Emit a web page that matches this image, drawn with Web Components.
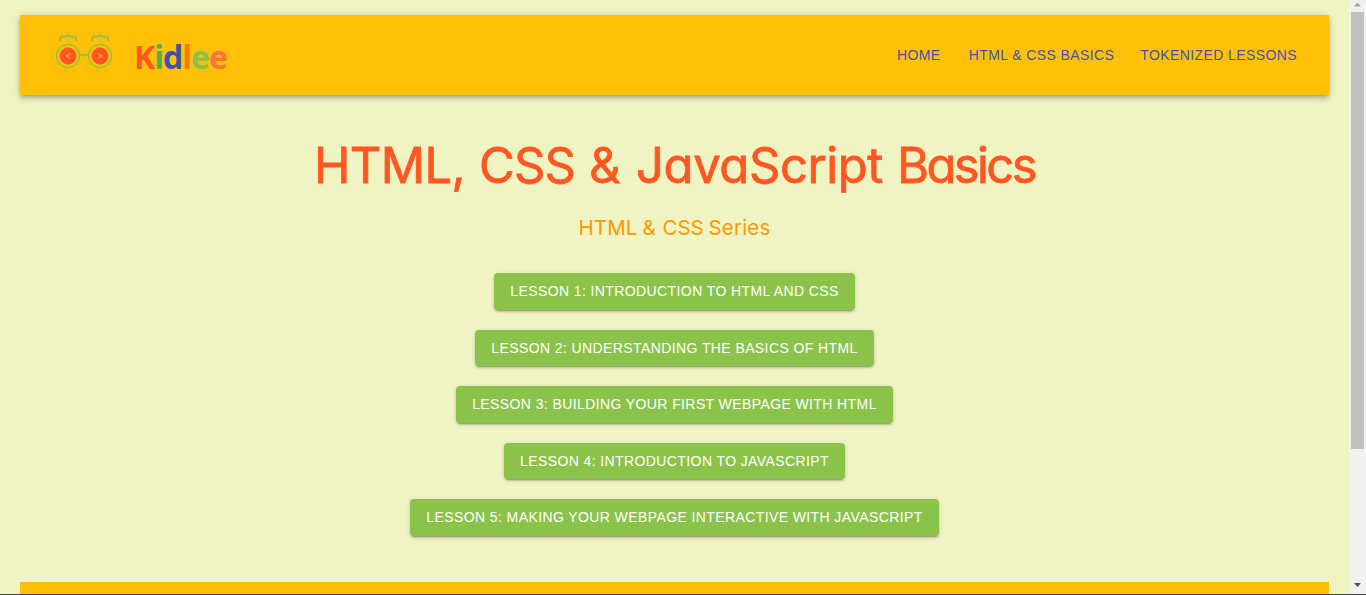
<!DOCTYPE html>
<html lang="en">
<head>
<meta charset="utf-8">
<title>Kidlee</title>
<style>
html,body{margin:0;height:100%;overflow:hidden}
body{font-family:"Liberation Sans",Arial,sans-serif;background:#f0f4c3}
</style>
</head>
<body>
<kid-app></kid-app>
<script>
const define = (name, html, setup) => customElements.define(name, class extends HTMLElement {
  connectedCallback() {
    if (this.shadowRoot) return;
    const t = document.createElement('template');
    t.innerHTML = html;
    this.attachShadow({mode: 'open'}).append(t.content.cloneNode(true));
    if (setup) setup(this);
  }
});

// Eyeglasses with curly-brace eyebrows and tag-bracket pupils
define('kid-glasses', `<style>:host{display:block;width:60px;height:40px}svg{display:block}</style>
<svg width="60" height="40" viewBox="54 32 60 40" fill="none" stroke="#8bc34a">
  <g stroke-width="1.9">
    <path d="M60 41.3v-1.8q0-3 3.2-3h2.4q2.3 0 2.5-2.2.2 2.2 2.5 2.2h2.4q3.2 0 3.2 3v1.8"/>
    <path d="M92 41.3v-1.8q0-3 3.2-3h2.4q2.3 0 2.5-2.2.2 2.2 2.5 2.2h2.4q3.2 0 3.2 3v1.8"/>
    <path d="M80 55h8"/>
  </g>
  <g stroke-width="1.3"><circle cx="68" cy="56" r="11.4"/><circle cx="100" cy="56" r="11.4"/></g>
  <g fill="#ff5722" stroke="none"><circle cx="68" cy="56" r="8.5"/><circle cx="100" cy="56" r="8.5"/></g>
  <g stroke="#ffb02a" stroke-width="1.1"><path d="M70 53.6 66.4 56l3.6 2.4M98 53.6l3.6 2.4-3.6 2.4"/></g>
</svg>`);

define('kid-logo', `<style>
:host{display:flex;align-items:flex-start}
.name{font:700 32px/44px "Open Sans","Noto Sans",sans-serif;letter-spacing:-1px;margin:3px 0 0 20px;white-space:nowrap}
</style><kid-glasses></kid-glasses><div class="name"></div>`, el => {
  const colors = ['#ff5722','#4caf50','#3f51b5','#f57c00','#8bc34a','#ff7043'];
  [...'Kidlee'].forEach((c, i) => {
    const s = document.createElement('span');
    s.textContent = c; s.style.color = colors[i];
    el.shadowRoot.querySelector('.name').append(s);
  });
});

define('kid-link', `<style>
:host{display:block;box-sizing:border-box;min-width:64px;padding:6px 8px;text-align:center;white-space:nowrap;font-size:14px;line-height:24.5px;letter-spacing:.4px;color:#3f51b5}
</style><slot></slot>`);

define('kid-header', `<style>
:host{display:flex;justify-content:space-between;box-sizing:border-box;height:80px;padding:17px 24px 0 34px;background:#ffc107;
box-shadow:0 2px 4px -1px rgba(0,0,0,.2),0 4px 5px rgba(0,0,0,.14),0 1px 10px rgba(0,0,0,.12)}
nav{display:flex;gap:10px;align-items:flex-start;padding-top:5px}
</style><kid-logo></kid-logo><nav><slot></slot></nav>`);

// A word whose tracking is set so that it spans its "w" attribute in pixels
define('kid-word', `<style>:host{display:inline-block;white-space:nowrap}</style><span><slot></slot></span>`, el => {
  const w = +el.getAttribute('w');
  const n = el.textContent.length;
  const natural = el.getBoundingClientRect().width;
  el.style.letterSpacing = (w - natural) / n + 'px';
});

define('kid-title', `<style>
:host{display:flex;justify-content:center;font-family:Inter,"Open Sans",sans-serif;font-feature-settings:"cv11";font-weight:400}
:host([level="1"]){font-size:49px;line-height:60px;gap:14px;color:#ff5722;-webkit-text-stroke:.8px #ff5722}
:host([level="2"]){font-size:20.5px;line-height:28px;gap:5px;color:#ff9800}
</style><slot></slot>`);

define('kid-button', `<style>
:host{display:block;box-sizing:border-box;padding:6px 16px;border-radius:4px;background:#8bc34a;color:#fff;font-size:14px;line-height:24.5px;letter-spacing:.4px;white-space:nowrap;
box-shadow:0 3px 1px -2px rgba(0,0,0,.2),0 2px 2px rgba(0,0,0,.14),0 1px 5px rgba(0,0,0,.12)}
</style><slot></slot>`);

define('kid-scrollbar', `<style>
:host{display:flex;flex-direction:column;align-items:center;width:17px;background:#f1f1f1}
svg{display:block;flex:none}
.thumb{width:13px;height:437px;background:#c1c1c1}
.fill{flex:1}
</style>
<svg width="17" height="12"><path d="M5 6.5 8.5 2.5 12 6.5z" fill="#a3a3a3"/></svg>
<div class="thumb"></div><div class="fill"></div>
<svg width="17" height="14"><path d="M5 3h7L8.5 7z" fill="#505050"/></svg>`);

define('kid-app', `<style>
:host{display:flex;flex-direction:column;height:100vh;background:#f0f4c3}
.view{display:flex;flex:1;min-height:0}
main{flex:1;min-width:0;overflow:hidden;padding:15px 20px 0}
kid-title[level="1"]{margin-top:41px}
kid-title[level="2"]{margin-top:18px}
.lessons{display:flex;flex-direction:column;align-items:center;gap:20px;margin-top:31px}
footer{height:80px;margin-top:46.5px;background:#ffc107}
.edge{height:1px;background:#444}
</style>
<div class="view"><main>
<kid-header><kid-link>HOME</kid-link><kid-link>HTML &amp; CSS BASICS</kid-link><kid-link>TOKENIZED LESSONS</kid-link></kid-header>
<kid-title level="1"><kid-word w="151">HTML,</kid-word> <kid-word w="96">CSS</kid-word> <kid-word w="33">&amp;</kid-word> <kid-word w="247">JavaScript</kid-word> <kid-word w="138">Basics</kid-word></kid-title>
<kid-title level="2"><kid-word w="59">HTML</kid-word> <kid-word w="15">&amp;</kid-word> <kid-word w="41">CSS</kid-word> <kid-word w="62">Series</kid-word></kid-title>
<div class="lessons">
<kid-button>LESSON 1: INTRODUCTION TO HTML AND CSS</kid-button>
<kid-button>LESSON 2: UNDERSTANDING THE BASICS OF HTML</kid-button>
<kid-button>LESSON 3: BUILDING YOUR FIRST WEBPAGE WITH HTML</kid-button>
<kid-button>LESSON 4: INTRODUCTION TO JAVASCRIPT</kid-button>
<kid-button>LESSON 5: MAKING YOUR WEBPAGE INTERACTIVE WITH JAVASCRIPT</kid-button>
</div>
<footer></footer>
</main><kid-scrollbar></kid-scrollbar></div>
<div class="edge"></div>`);
</script>
</body>
</html>
